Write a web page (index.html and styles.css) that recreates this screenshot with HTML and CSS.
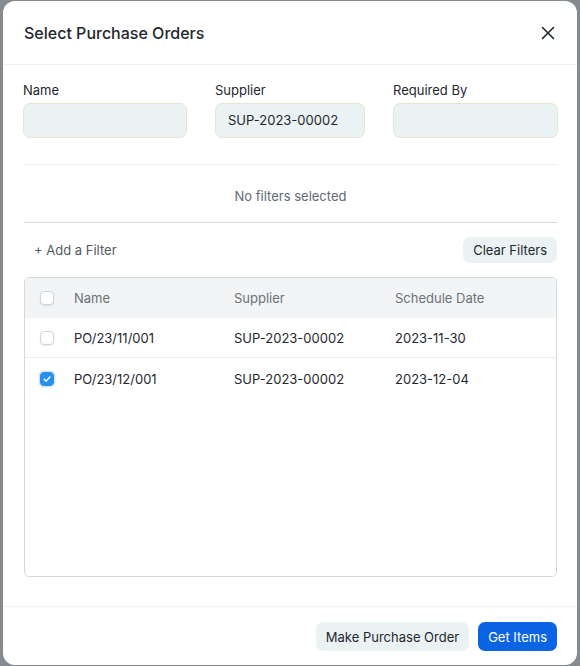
FILE: index.html
```html
<!DOCTYPE html>
<html lang="en">
<head>
<meta charset="utf-8">
<title>Select Purchase Orders</title>
<link rel="stylesheet" href="styles.css">
</head>
<body>
<div class="modal">
  <div class="modal-header">
    <h3 class="modal-title">Select Purchase Orders</h3>
    <button class="close-btn" aria-label="Close">
      <svg width="14" height="14" viewBox="0 0 14 14"><path d="M1.5 1.5L12.5 12.5M12.5 1.5L1.5 12.5" stroke="#1f272e" stroke-width="1.6" stroke-linecap="round" fill="none"/></svg>
    </button>
  </div>
  <div class="modal-body">
    <div class="fields">
      <div class="field">
        <label class="field-label">Name</label>
        <div class="input"></div>
      </div>
      <div class="field">
        <label class="field-label">Supplier</label>
        <div class="input">SUP-2023-00002</div>
      </div>
      <div class="field">
        <label class="field-label">Required By</label>
        <div class="input"></div>
      </div>
    </div>
    <div class="filter-summary">No filters selected</div>
    <div class="filter-actions">
      <span class="add-filter">+ Add a Filter</span>
      <button class="btn btn-light">Clear Filters</button>
    </div>
    <div class="table">
      <div class="row head">
        <div class="cell"><span class="check"></span></div>
        <div class="cell">Name</div>
        <div class="cell">Supplier</div>
        <div class="cell">Schedule Date</div>
      </div>
      <div class="row">
        <div class="cell"><span class="check"></span></div>
        <div class="cell">PO/23/11/001</div>
        <div class="cell">SUP-2023-00002</div>
        <div class="cell">2023-11-30</div>
      </div>
      <div class="row last">
        <div class="cell"><span class="check checked"><svg width="10" height="10" viewBox="0 0 10 10"><path d="M2.2 5.2L4.2 7.1L7.9 3" stroke="#fff" stroke-width="1.5" fill="none" stroke-linecap="round" stroke-linejoin="round"/></svg></span></div>
        <div class="cell">PO/23/12/001</div>
        <div class="cell">SUP-2023-00002</div>
        <div class="cell">2023-12-04</div>
      </div>
    </div>
  </div>
  <div class="modal-footer">
    <button class="btn btn-light btn-md">Make Purchase Order</button>
    <button class="btn btn-primary btn-md">Get Items</button>
  </div>
</div>
</body>
</html>
```
FILE: styles.css
```css
* { box-sizing: border-box; }
html, body { margin: 0; padding: 0; }
body {
  width: 580px;
  height: 666px;
  overflow: hidden;
  background: #858b8f;
  padding: 1px 3px 0 3px;
  font-family: Inter, "Noto Sans", "Liberation Sans", sans-serif;
  font-size: 13px;
  color: #1f272e;
}
.modal {
  background: #fff;
  border-radius: 12px;
  height: 664px;
  display: flex;
  flex-direction: column;
  overflow: hidden;
}
.modal-header {
  height: 64px;
  border-bottom: 1px solid #f1f1f1;
  display: flex;
  align-items: center;
  justify-content: space-between;
  padding: 0 18px 0 21px;
}
.modal-title {
  margin: 0;
  font-size: 16px;
  font-weight: 500;
  color: #1f272e;
}
.close-btn {
  border: 0;
  background: none;
  padding: 4px;
  display: flex;
  cursor: pointer;
}
.modal-body {
  padding: 17px 19px 0 20px;
  flex: 1;
}
.fields {
  display: grid;
  grid-template-columns: 164px 150px 165px;
  column-gap: 28px;
  margin-bottom: 26px;
}
.field-label {
  display: block;
  line-height: 16px;
  margin-bottom: 5px;
  color: #1f272e;
}
.input {
  height: 35px;
  background: #ebf2f3;
  border: 1px solid #e1e7d0;
  border-radius: 7px;
  padding: 0 12px;
  line-height: 33px;
  font-size: 13px;
  color: #1f272e;
}
.filter-summary {
  margin: 0 1px;
  border-top: 1px solid #efefef;
  border-bottom: 1px solid #dcdcdc;
  height: 59px;
  padding-top: 23px;
  line-height: 16px;
  text-align: center;
  color: #606b74;
}
.filter-actions {
  margin: 14px 1px;
  display: flex;
  align-items: center;
  justify-content: space-between;
}
.add-filter {
  padding-left: 10px;
  color: #525b63;
}
.btn {
  border: 0;
  font-family: inherit;
  font-size: 13px;
  border-radius: 7px;
  padding: 0 10px;
  height: 26px;
  cursor: pointer;
}
.btn-light {
  background: #eaf2f3;
  color: #1f272e;
}
.btn-md {
  height: 29px;
}
.btn-primary {
  background: #0b64e3;
  color: #fff;
}
.table {
  margin: 0 1px 29px;
  height: 300px;
  border: 1px solid #d3d9de;
  border-radius: 5px;
  overflow: hidden;
}
.row {
  display: grid;
  grid-template-columns: 34px 160px 161px 1fr;
  height: 40px;
  align-items: center;
  padding-left: 15px;
  border-bottom: 1px solid #ededed;
}
.row.head {
  background: #f3f4f5;
  border-bottom: 0;
  color: #6b7278;
}
.row.last { border-bottom: 0; height: 41px; }
.cell { line-height: 16px; }
.check {
  display: flex;
  align-items: center;
  justify-content: center;
  width: 14px;
  height: 14px;
  border: 1px solid #cfd4d8;
  border-radius: 4px;
  background: #fff;
  box-shadow: 0 1px 2px rgba(0,0,0,0.08);
}
.check.checked {
  background: #2490ef;
  border-color: #2490ef;
  box-shadow: 0 0 0 1.5px #dfe3e6;
}
.modal-footer {
  border-top: 1px solid #f1f1f1;
  padding: 15px 20px 14px;
  display: flex;
  justify-content: flex-end;
  gap: 9px;
}
```
